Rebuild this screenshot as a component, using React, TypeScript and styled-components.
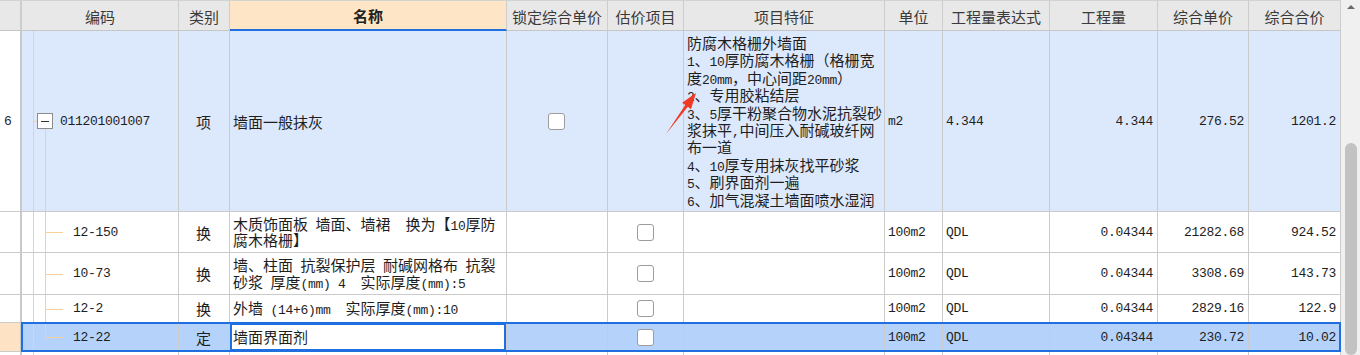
import React from "react";
import styled, { createGlobalStyle, css } from "styled-components";

const GlobalStyle = createGlobalStyle`
  html, body { margin: 0; padding: 0; overflow: hidden; background: #ffffff; }
  body { font-family: "Noto Sans CJK SC", "Liberation Sans", sans-serif; }
`;

const COLS =
  "22px 157px 51px 277px 101px 76px 201px 58px 107px 108px 91px 92px";

const GRID = "#cbcbcb";
const BLUE = "#1f6fe0";
const TREE = "#f7cf9c";

const Frame = styled.div`
  position: relative;
  display: flex;
  width: 1360px;
  height: 355px;
  overflow: hidden;
`;

const Table = styled.div`
  width: 1341px;
  display: flex;
  flex-direction: column;
`;

const HeaderRow = styled.div`
  display: grid;
  grid-template-columns: ${COLS};
  height: 31px;
  box-sizing: border-box;
  border-top: 1px solid #d2d2d2;
  flex: none;
`;

const HeadCell = styled.div<{ $active?: boolean; $first?: boolean }>`
  box-sizing: border-box;
  display: flex;
  align-items: center;
  justify-content: center;
  background: ${(p) => (p.$active ? "#fde5c6" : "#e8e8e8")};
  border-right: ${(p) => (p.$first ? "2px" : "1px")} solid #cdcdcd;
  border-bottom: ${(p) => (p.$active ? `2px solid ${BLUE}` : "1px solid #c6c6c6")};
  font-size: 15px;
  font-weight: ${(p) => (p.$active ? 700 : 400)};
  color: ${(p) => (p.$active ? "#222" : "#3a3a3a")};
  white-space: nowrap;
  padding-top: ${(p) => (p.$active ? "0" : "1px")};
`;

const Row = styled.div<{ $h: number; $bg: string; $selected?: boolean }>`
  display: grid;
  grid-template-columns: ${COLS};
  height: ${(p) => p.$h}px;
  background: ${(p) => p.$bg};
  position: relative;
  flex: none;
  ${(p) =>
    p.$selected &&
    css`
      &::after {
        content: "";
        position: absolute;
        left: 21px;
        right: 0;
        top: -1px;
        bottom: 0;
        border: 2px solid ${BLUE};
        pointer-events: none;
      }
    `}
`;

type Align = "left" | "center" | "right";

const Cell = styled.div<{ $align?: Align; $top?: boolean; $focus?: boolean }>`
  box-sizing: border-box;
  position: relative;
  display: flex;
  align-items: ${(p) => (p.$top ? "flex-start" : "center")};
  justify-content: ${(p) =>
    p.$align === "center" ? "center" : p.$align === "right" ? "flex-end" : "flex-start"};
  padding: ${(p) => (p.$top ? "3px 3px 0 3px" : "0 4px 0 3px")};
  border-right: 1px solid ${GRID};
  border-bottom: 1px solid ${GRID};
  background: ${(p) => (p.$focus ? "#ffffff" : "transparent")};
  box-shadow: ${(p) => (p.$focus ? `inset 0 0 0 2px ${BLUE}` : "none")};
  font-size: 15px;
  line-height: 17px;
  color: #1e1e1e;
  white-space: pre;
  overflow: hidden;
`;

const IndexCell = styled(Cell)<{ $current?: boolean }>`
  border-right: 2px solid #c9c9c9;
  background: ${(p) => (p.$current ? "#fde3c4" : "#ffffff")};
  padding-left: 4px;
`;

const CodeCell = styled(Cell)<{ $indent: number }>`
  padding-left: ${(p) => p.$indent}px;
`;

const TextLines = styled.div`
  display: flex;
  flex-direction: column;
`;

const TextLine = styled.div<{ $h: number }>`
  height: ${(p) => p.$h}px;
  line-height: ${(p) => p.$h}px;
  overflow: visible;
`;

const Mono = styled.span`
  font-family: "Liberation Mono", "DejaVu Sans Mono", monospace;
  font-size: 13px;
  letter-spacing: -0.3px;
  line-height: 1;
`;

const VLine = styled.span<{ $x: number; $top?: string; $bottom?: string }>`
  position: absolute;
  left: ${(p) => p.$x}px;
  top: ${(p) => p.$top ?? "0"};
  bottom: ${(p) => p.$bottom ?? "0"};
  width: 1px;
  background: ${TREE};
`;

const HLine = styled.span<{ $x: number; $w: number }>`
  position: absolute;
  left: ${(p) => p.$x}px;
  top: 50%;
  width: ${(p) => p.$w}px;
  height: 1px;
  background: ${TREE};
`;

const Expander = styled.span`
  box-sizing: border-box;
  flex: none;
  width: 16px;
  height: 16px;
  margin-right: 7px;
  border: 1px solid #8c8c8c;
  background: #ffffff;
  display: flex;
  align-items: center;
  justify-content: center;
  &::before {
    content: "";
    width: 8px;
    height: 1px;
    background: #333;
  }
`;

const Check = styled.span`
  box-sizing: border-box;
  width: 17px;
  height: 17px;
  border: 1px solid #9c9c9c;
  border-radius: 3px;
  background: #ffffff;
`;

const ScrollTrack = styled.div`
  width: 19px;
  background: #f0f0f0;
  display: flex;
  flex-direction: column;
  align-items: center;
`;

const ScrollUp = styled.div`
  height: 17px;
  width: 19px;
  display: flex;
  align-items: center;
  justify-content: center;
  &::before {
    content: "";
    width: 0;
    height: 0;
    border-left: 4px solid transparent;
    border-right: 4px solid transparent;
    border-bottom: 4px solid #6a6a6a;
    margin-top: -4px;
  }
`;

const ScrollThumb = styled.div`
  margin-top: 126px;
  width: 12px;
  height: 212px;
  border-radius: 6px;
  background: #c2c2c2;
`;

const ArrowMark = styled.svg`
  position: absolute;
  left: 655px;
  top: 85px;
  width: 50px;
  height: 60px;
  pointer-events: none;
`;

const Mixed: React.FC<{ text: string }> = ({ text }) => (
  <>
    {text
      .split(/([\x20-\x7e]+)/)
      .filter(Boolean)
      .map((s, i) =>
        /^[\x20-\x7e]+$/.test(s) ? <Mono key={i}>{s}</Mono> : <span key={i}>{s}</span>
      )}
  </>
);

const headers = [
  "",
  "编码",
  "类别",
  "名称",
  "锁定综合单价",
  "估价项目",
  "项目特征",
  "单位",
  "工程量表达式",
  "工程量",
  "综合单价",
  "综合合价",
];

const features = [
  "防腐木格栅外墙面",
  "1、10厚防腐木格栅（格栅宽",
  "度20mm，中心间距20mm）",
  "2、专用胶粘结层",
  "3、5厚干粉聚合物水泥抗裂砂",
  "浆抹平,中间压入耐碱玻纤网",
  "布一道",
  "4、10厚专用抹灰找平砂浆",
  "5、刷界面剂一遍",
  "6、加气混凝土墙面喷水湿润",
];

type Child = {
  code: string;
  type: string;
  name: string[];
  h: number;
  price: string;
  total: string;
  selected?: boolean;
};

const children: Child[] = [
  {
    code: "12-150",
    type: "换",
    name: ["木质饰面板 墙面、墙裙  换为【10厚防", "腐木格栅】"],
    h: 41,
    price: "21282.68",
    total: "924.52",
  },
  {
    code: "10-73",
    type: "换",
    name: ["墙、柱面 抗裂保护层 耐碱网格布 抗裂", "砂浆 厚度(mm) 4  实际厚度(mm):5"],
    h: 42,
    price: "3308.69",
    total: "143.73",
  },
  {
    code: "12-2",
    type: "换",
    name: ["外墙 (14+6)mm  实际厚度(mm):10"],
    h: 28,
    price: "2829.16",
    total: "122.9",
  },
  {
    code: "12-22",
    type: "定",
    name: ["墙面界面剂"],
    h: 29,
    price: "230.72",
    total: "10.02",
    selected: true,
  },
];

export default function App() {
  return (
    <>
      <GlobalStyle />
      <Frame>
        <Table>
          <HeaderRow>
            {headers.map((h, i) => (
              <HeadCell key={i} $first={i === 0} $active={h === "名称"}>
                {h}
              </HeadCell>
            ))}
          </HeaderRow>

          <Row $h={181} $bg="#dce8fc">
            <IndexCell>
              <Mono>6</Mono>
            </IndexCell>
            <CodeCell $indent={15}>
              <VLine $x={11} />
              <HLine $x={11} $w={4} />
              <VLine $x={23} $top="calc(50% + 8px)" />
              <Expander />
              <Mono>011201001007</Mono>
            </CodeCell>
            <Cell $align="center">项</Cell>
            <Cell>墙面一般抹灰</Cell>
            <Cell $align="center">
              <Check />
            </Cell>
            <Cell />
            <Cell $top>
              <TextLines>
                {features.map((f, i) => (
                  <TextLine key={i} $h={17.4}>
                    <Mixed text={f} />
                  </TextLine>
                ))}
              </TextLines>
            </Cell>
            <Cell>
              <Mono>m2</Mono>
            </Cell>
            <Cell>
              <Mono>4.344</Mono>
            </Cell>
            <Cell $align="right">
              <Mono>4.344</Mono>
            </Cell>
            <Cell $align="right">
              <Mono>276.52</Mono>
            </Cell>
            <Cell $align="right">
              <Mono>1201.2</Mono>
            </Cell>
          </Row>

          {children.map((c, idx) => {
            const last = idx === children.length - 1;
            return (
              <Row key={c.code} $h={c.h} $bg={c.selected ? "#b5d3fa" : "#ffffff"} $selected={c.selected}>
                <IndexCell $current={c.selected} />
                <CodeCell $indent={51}>
                  <VLine $x={11} />
                  <VLine $x={23} $bottom={last ? "50%" : "0"} />
                  <HLine $x={23} $w={18} />
                  <Mono>{c.code}</Mono>
                </CodeCell>
                <Cell $align="center">{c.type}</Cell>
                <Cell $focus={c.selected}>
                  <TextLines>
                    {c.name.map((n, i) => (
                      <TextLine key={i} $h={16.5}>
                        <Mixed text={n} />
                      </TextLine>
                    ))}
                  </TextLines>
                </Cell>
                <Cell />
                <Cell $align="center">
                  <Check />
                </Cell>
                <Cell />
                <Cell>
                  <Mono>100m2</Mono>
                </Cell>
                <Cell>
                  <Mono>QDL</Mono>
                </Cell>
                <Cell $align="right">
                  <Mono>0.04344</Mono>
                </Cell>
                <Cell $align="right">
                  <Mono>{c.price}</Mono>
                </Cell>
                <Cell $align="right">
                  <Mono>{c.total}</Mono>
                </Cell>
              </Row>
            );
          })}

          <Row $h={28} $bg="#ffffff">
            <IndexCell />
            <CodeCell $indent={51}>
              <VLine $x={11} />
            </CodeCell>
            {Array.from({ length: 10 }).map((_, i) => (
              <Cell key={i} />
            ))}
          </Row>
        </Table>

        <ScrollTrack>
          <ScrollUp />
          <ScrollThumb />
        </ScrollTrack>

        <ArrowMark viewBox="0 0 50 60">
          <polygon
            points="11,49 32.8,21.8 36,24.2 41,8 27.1,17.7 30.3,20"
            fill="#f03a24"
          />
        </ArrowMark>
      </Frame>
    </>
  );
}
